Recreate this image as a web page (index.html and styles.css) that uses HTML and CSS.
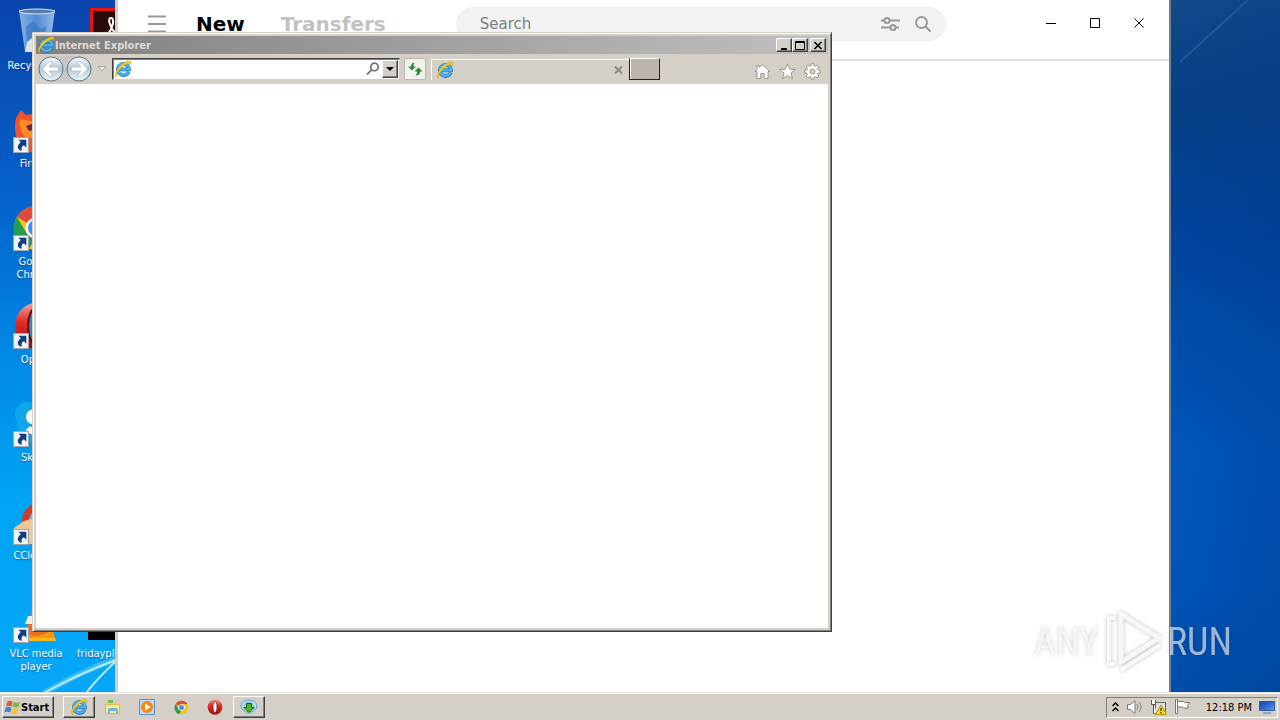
FILE: index.html
```html
<!DOCTYPE html>
<html lang="en">
<head>
<meta charset="utf-8">
<title>Desktop</title>
<link rel="stylesheet" href="styles.css">
</head>
<body>
<svg class="defs" width="0" height="0" aria-hidden="true">
  <defs>
    <linearGradient id="glass" x1="0" y1="0" x2="1" y2="0"><stop offset="0" stop-color="#9cc4ee"/><stop offset=".5" stop-color="#5e95da"/><stop offset="1" stop-color="#b0d0f0"/></linearGradient>
    <linearGradient id="red" x1="0" y1="0" x2="0" y2="1"><stop offset="0" stop-color="#f0a0a0"/><stop offset=".4" stop-color="#e03028"/><stop offset="1" stop-color="#a00a10"/></linearGradient>
    <linearGradient id="orb" x1="0" y1="0" x2="0" y2="1"><stop offset="0" stop-color="#f6fafc"/><stop offset=".5" stop-color="#b4c8d6"/><stop offset="1" stop-color="#e8fbff"/></linearGradient>
    <linearGradient id="screen" x1="0" y1="0" x2="1" y2="1"><stop offset="0" stop-color="#143c9c"/><stop offset=".5" stop-color="#2c6cd0"/><stop offset="1" stop-color="#5aa0ec"/></linearGradient>
    <symbol id="ie" viewBox="0 0 18 18">
      <path d="M14.6 11.6A5.6 5.6 0 1 1 15 9.4H6.2" fill="none" stroke="#1f78bd" stroke-width="3.6"/>
      <path d="M14.4 11.8A5.6 5.6 0 1 1 15 9.4H6.2" fill="none" stroke="#4db4ee" stroke-width="2.4"/>
      <path d="M3 17.2C-.6 16 2 9.4 7 5 11.500 1 16 0 17 2.200c.3.8 0 1.800-.4 2.600.2-2.400-2.800-2.200-7 1C4.500 9.600 1.600 14.500 3 17.200z" fill="#f6cb20" stroke="#c99a10" stroke-width=".4"/>
    </symbol>
    <symbol id="shortcut" viewBox="0 0 15 15">
      <path d="M.5.500h14v14H.5z" fill="#f2f5f8" stroke="#a0a6ae"/>
      <path d="M5 2.500h7.500V10l-2.300-2.300C8 9 7.600 10.500 8.300 13 4.500 12.500 2.500 9 7.300 4.800z" fill="#123f82"/>
    </symbol>
    <symbol id="chrome" viewBox="0 0 48 48">
      <circle cx="24" cy="24" r="22" fill="#f5c518"/>
      <path d="M24 24L5 13A22 22 0 0 1 43 13H24z" fill="#dd4b3e"/>
      <path d="M5 13l10 17 9 4-8 11.500A22 22 0 0 1 5 13z" fill="#279b55"/>
      <circle cx="24" cy="24" r="10.500" fill="#fff"/><circle cx="24" cy="24" r="8" fill="#4a8af0"/>
    </symbol>
    <symbol id="opera" viewBox="0 0 48 48">
      <ellipse cx="24" cy="24" rx="22" ry="23" fill="url(#red)"/>
      <ellipse cx="24" cy="24" rx="6" ry="17" fill="#fff" stroke="#7c0808" stroke-width="2"/>
    </symbol>
  </defs>
</svg>
<div class="screen">
  <main class="desktop">
    <svg class="rays" viewBox="0 0 115 90" aria-hidden="true">
      <path d="M44 91Q80 70 116 57" fill="none" stroke="#5cc8fb" stroke-width="6" opacity=".6"/>
      <path d="M44 91Q80 71 116 58M86 91Q98 76 116 59" fill="none" stroke="#b8ecff" stroke-width="2"/>
    </svg>
    <svg class="ray-top" viewBox="0 0 110 90" aria-hidden="true"><path d="M10 62L78 0" stroke="#3a72a8" stroke-width="2" opacity=".4"/></svg>

    <div class="icons">
      <div class="shortcut c1 r1">
        <svg viewBox="0 0 48 48"><path d="M7 2h36l-6 42H13z" fill="url(#glass)" opacity=".85"/><path d="M14 18l8-5 6 8 6-3-2 20H15z" fill="#3c78c8" opacity=".7"/><path d="M15 34l5-4 8 4 5-3-1 13H13z" fill="#dfe5ea"/><ellipse cx="25" cy="3.500" rx="18" ry="2.500" fill="#5a7da8" stroke="#d5e5f5"/></svg>
        <span>Recycle Bin</span>
      </div>
      <div class="shortcut c2 r1">
        <svg viewBox="0 0 48 48"><path d="M5.500 1.500h40v45h-40z" fill="#2b0a0c" stroke="#e5170e" stroke-width="3"/><path d="M22 26c5-6 7-16 3-16s-1 9 4 15" fill="none" stroke="#fff" stroke-width="2"/></svg>
      </div>
      <div class="shortcut c1 r2">
        <svg viewBox="0 0 48 48"><path d="M4 12l5-8 5 5 6-1 4-6 20 18c2 16-8 27-20 27C9 47 0 32 4 12z" fill="#f4522c"/><path d="M8 13l14 3v16h-8q-8-8-6-19z" fill="#f98d24"/><path d="M14 20l8-3v7l-5 1z" fill="#74204c"/></svg>
        <svg class="arrow"><use href="#shortcut"/></svg>
        <span>Firefox</span>
      </div>
      <div class="shortcut c1 r3">
        <svg><use href="#chrome"/></svg><svg class="arrow"><use href="#shortcut"/></svg>
        <span>Google Chrome</span>
      </div>
      <div class="shortcut c1 r4">
        <svg viewBox="0 0 48 48"><ellipse cx="24" cy="24" rx="21" ry="23" fill="url(#red)"/><ellipse cx="24" cy="24" rx="8" ry="18" fill="#2a86c8" stroke="#6a0808" stroke-width="2"/></svg>
        <svg class="arrow"><use href="#shortcut"/></svg>
        <span>Opera</span>
      </div>
      <div class="shortcut c1 r5">
        <svg viewBox="0 0 48 48"><circle cx="15" cy="14" r="12" fill="#0aa8ee"/><circle cx="25" cy="24" r="20" fill="#12a5ea"/><path d="M34 15c-5-5-17-5-17 2 0 8 17 4 17 11 0 6-13 6-18 0" fill="none" stroke="#fff" stroke-width="6"/></svg>
        <svg class="arrow"><use href="#shortcut"/></svg>
        <span>Skype</span>
      </div>
      <div class="shortcut c1 r6">
        <svg viewBox="0 0 48 48"><circle cx="29" cy="23" r="19" fill="#d43a2c"/><circle cx="29" cy="23" r="12" fill="#78b4d8"/><path d="M2 30l10-7 7-2 14 11-12 14H3z" fill="#efc898"/></svg>
        <svg class="arrow"><use href="#shortcut"/></svg>
        <span>CCleaner</span>
      </div>
      <div class="shortcut c1 r7">
        <svg viewBox="0 0 48 48"><path d="M10 31h30l4 14H5z" fill="#f39a12"/><path d="M24 2l12 34c-6 5-18 5-23 0z" fill="#e8701c"/><path d="M16 20l16 0 3 8-22 0z" fill="#eee"/><path d="M9 42h34l1 3H7z" fill="#fbb81c"/></svg>
        <svg class="arrow"><use href="#shortcut"/></svg>
        <span>VLC media player</span>
      </div>
      <div class="shortcut c2 r7">
        <svg viewBox="0 0 48 48"><path d="M2 0h44v44H2z" fill="#000"/></svg>
        <span>fridayplanner</span>
      </div>
    </div>

    <section class="app" aria-label="Transfers application">
      <header class="app-head">
        <button class="plain menu" aria-label="Menu"><svg width="18" height="18" viewBox="0 0 18 18"><path d="M0 1.500h18M0 9h18M0 16.500h18" stroke="#999" stroke-width="2"/></svg></button>
        <nav class="app-tabs"><a href="#new" class="current">New</a><a href="#transfers">Transfers</a></nav>
        <form class="search">
          <input type="text" placeholder="Search" aria-label="Search">
          <button type="button" class="plain" aria-label="Filter"><svg width="20" height="16" viewBox="0 0 20 16"><g fill="none" stroke="#999" stroke-width="2"><path d="M1 4.500h3M10 4.500h10M1 11.500h9M16 11.500h3"/><circle cx="7" cy="4.500" r="2.600"/><circle cx="13" cy="11.500" r="2.600"/></g></svg></button>
          <button type="button" class="plain" aria-label="Find"><svg width="18" height="18" viewBox="0 0 18 18"><g fill="none" stroke="#999" stroke-width="2"><circle cx="7.500" cy="7.500" r="5.500"/><path d="M11.500 11.500l5 5"/></g></svg></button>
        </form>
        <div class="app-controls">
          <button class="plain" aria-label="Minimize"><svg width="12" height="12" viewBox="0 0 12 12"><path d="M1 5.500h10" stroke="#000"/></svg></button>
          <button class="plain" aria-label="Maximize"><svg width="12" height="12" viewBox="0 0 12 12"><path d="M1.500.500h9v9h-9z" fill="none" stroke="#000"/></svg></button>
          <button class="plain" aria-label="Close"><svg width="12" height="12" viewBox="0 0 12 12"><path d="M1.500.500l9 9M10.500.500l-9 9" stroke="#000"/></svg></button>
        </div>
      </header>
    </section>

    <section class="browser" aria-label="Internet Explorer">
      <header class="titlebar">
        <svg width="18" height="18"><use href="#ie"/></svg>
        <h1>Internet Explorer</h1>
        <button class="cap" aria-label="Minimize"><svg width="10" height="9" viewBox="0 0 10 9"><path d="M2 7h6v2H2z"/></svg></button>
        <button class="cap" aria-label="Maximize"><svg width="10" height="9" viewBox="0 0 10 9"><path d="M.5.500h9v8h-9zM.5 1.500h9" fill="none" stroke="#000"/></svg></button>
        <button class="cap close" aria-label="Close"><svg width="10" height="9" viewBox="0 0 10 9"><path d="M1.500 1l7 7M8.500 1l-7 7" stroke="#000" stroke-width="1.600"/></svg></button>
      </header>
      <div class="toolbar">
        <div class="travel">
          <button class="plain" aria-label="Back"><svg width="26" height="26" viewBox="0 0 26 26"><circle cx="13" cy="13" r="12" fill="url(#orb)" stroke="#66737e"/><path d="M4.500 13L11 6h4l-4 5h9.500v4H11l4 5h-4z" fill="#fff" stroke="#9fb4c4" stroke-width=".6"/></svg></button>
          <button class="plain" aria-label="Forward"><svg width="26" height="26" viewBox="0 0 26 26"><circle cx="13" cy="13" r="12" fill="url(#orb)" stroke="#66737e"/><path d="M21.500 13L15 6h-4l4 5H5.500v4H15l-4 5h4z" fill="#fff" stroke="#9fb4c4" stroke-width=".6"/></svg></button>
        </div>
        <button class="plain recent" aria-label="Recent pages"><svg width="10" height="6" viewBox="0 0 10 6"><path d="M1 .5h8l-4 4.500z" fill="#e8e5e0" stroke="#aaa59e"/></svg></button>
        <div class="address">
          <svg width="18" height="18"><use href="#ie"/></svg>
          <input type="text" aria-label="Address">
          <button class="plain" aria-label="Search"><svg width="14" height="14" viewBox="0 0 14 14"><g fill="none" stroke="#777" stroke-width="1.800"><circle cx="8.500" cy="5" r="3.800"/><path d="M5.500 8L1 12.500"/></g></svg></button>
          <button class="drop" aria-label="Show addresses"><svg width="8" height="4" viewBox="0 0 8 4"><path d="M0 0h8L4 4z"/></svg></button>
        </div>
        <button class="refresh" aria-label="Refresh"><svg width="16" height="16" viewBox="0 0 16 16"><path d="M7.500 1.500C5 2 4 3 4 5.500H1L5 9.500l4-4H6.500C6.500 3.500 7 2.500 7.500 1.500zM8.500 14.500c1-1 1.500-2 1.500-4H7.500l4-4 4 4H13c0 3-1.500 4-4.500 4z" fill="#2f8a35"/></svg></button>
        <div class="tab">
          <svg width="18" height="18"><use href="#ie"/></svg>
          <button class="plain" aria-label="Close tab"><svg width="9" height="8" viewBox="0 0 9 8"><path d="M1 .5l7 7M8 .5l-7 7" stroke="#888" stroke-width="2"/></svg></button>
        </div>
        <button class="newtab" aria-label="New tab"></button>
        <div class="tools">
          <button class="plain" aria-label="Home"><svg width="17" height="17" viewBox="0 0 17 17"><path d="M8.500 1.500l7.500 7h-2V15.500H10.200V10.500H6.800v5H3V8.500H1L3 6.500V2.500h2v2z" fill="#fff" stroke="#9a9690"/></svg></button>
          <button class="plain" aria-label="Favorites"><svg width="17" height="17" viewBox="0 0 17 17"><path d="M8.500.8l2.200 5.400 5.700.3-4.400 3.600 1.500 5.700-5-3.200-5 3.200L5 10.100.6 6.500l5.700-.3z" fill="#fff" stroke="#9a9690"/></svg></button>
          <button class="plain" aria-label="Tools"><svg width="17" height="17" viewBox="0 0 17 17"><path d="M7 .8h3v2l1.500.6L13 2l2 2-1.400 1.500.6 1.500h2v3h-2l-.6 1.500L15 13l-2 2-1.500-1.400-1.500.6v2H7v-2l-1.500-.6L4 15l-2-2 1.400-1.500L2.800 10h-2V7h2l.6-1.500L2 4l2-2 1.500 1.400L7 2.800z" fill="#fff" stroke="#9a9690"/><circle cx="8.500" cy="8.500" r="2.500" fill="#d4d0c8" stroke="#9a9690"/></svg></button>
        </div>
      </div>
      <div class="page"></div>
    </section>

    <div class="watermark" aria-label="ANY RUN">
      <span>ANY</span>
      <svg width="60" height="64" viewBox="0 0 60 64" fill="none" stroke="#fff" stroke-opacity=".8" stroke-width="4" stroke-linejoin="round"><path d="M18 4l38 24-38 24z" stroke-width="5"/><path d="M12 8H6v46h6M18 60l39-25"/></svg>
      <span>RUN</span>
    </div>
  </main>

  <footer class="taskbar">
    <button class="start"><svg width="17" height="17" viewBox="0 0 17 17"><path d="M3.500 2.500Q6 1 8.500 2.500L7.500 7.500Q5 6 2 7.500z" fill="#e8552a"/><path d="M9.500 3q3 1.500 6.500 0l-1.500 5q-3 1-6-.5z" fill="#7dbb3c"/><path d="M1.800 8.500q3-1.500 5.500 0l-1 5q-3-1.500-6 0z" fill="#3c86d8"/><path d="M8.200 9q3 1.500 6 .5l-1.500 5q-3 1-5.500-.5z" fill="#f7c62c"/></svg>Start</button>
    <nav class="tasks">
      <button class="task raised" aria-label="Internet Explorer"><svg width="18" height="18"><use href="#ie"/></svg></button>
      <button class="task" aria-label="Explorer"><svg width="18" height="18" viewBox="0 0 18 18"><path d="M2 3h5l1 2h7v11H2z" fill="#f0cf6a"/><path d="M4 2h5v3H4z" fill="#6fbf58"/><path d="M1.500 6.500h14v9h-14z" fill="#fae795" stroke="#dcbc55"/><path d="M4 16v-4q0-2 2-2h6q2 0 2 2v4h-2v-3H6v3z" fill="#6cb9e6"/></svg></button>
      <button class="task" aria-label="Media Player"><svg width="18" height="18" viewBox="0 0 18 18"><path d="M1.500 1.500h15v15h-15z" fill="#b9d8f4" stroke="#5e94c6"/><circle cx="9" cy="9" r="6" fill="#f58a14"/><path d="M7 5.500l5.500 3.500L7 12.500z" fill="#fff"/></svg></button>
      <button class="task" aria-label="Chrome"><svg width="15" height="15"><use href="#chrome"/></svg></button>
      <button class="task" aria-label="Opera"><svg width="16" height="16"><use href="#opera"/></svg></button>
      <button class="task raised" aria-label="Downloader"><svg width="18" height="18" viewBox="0 0 18 18"><ellipse cx="9" cy="8" rx="8" ry="6" fill="#b6dff0" stroke="#5da6c6"/><ellipse cx="9" cy="10" rx="5" ry="6" fill="none" stroke="#78bdd6"/><path d="M6.500 5.500h5v4H14l-5 5-5-5h2.500z" fill="#4cb522" stroke="#26600f"/></svg></button>
    </nav>
    <div class="tray">
      <button class="plain" aria-label="Show hidden icons"><svg width="7" height="10" viewBox="0 0 7 10"><path d="M.5 4l3-3 3 3M.5 9l3-3 3 3" fill="none" stroke="#000" stroke-width="1.500"/></svg></button>
      <button class="plain" aria-label="Volume"><svg width="17" height="16" viewBox="0 0 17 16"><path d="M1.500 5.500h3L9 1.500v13l-4.500-4h-3z" fill="#fff" stroke="#777"/><path d="M11 5q2 3 0 6M13 3q4 5 0 10" fill="none" stroke="#888"/></svg></button>
      <button class="plain" aria-label="Network"><svg width="17" height="16" viewBox="0 0 17 16"><path d="M5.500 3.500h10v9h-10z" fill="#ddd" stroke="#666"/><path d="M1.500 1v4.500h4V1M3.500 5.500V14.500h4" fill="#fff" stroke="#555"/><path d="M11 6l5.500 9.500h-11z" fill="#f8d823" stroke="#b99a00"/><path d="M11 9v3M11 13v1.500" stroke="#000"/></svg></button>
      <button class="plain" aria-label="Action Center"><svg width="17" height="16" viewBox="0 0 17 16"><path d="M1.500.500h2v14h-2z" fill="#fff" stroke="#777"/><path d="M3.500 2.500h6l1 1h5l-2 3 1 2.500h-5l-1-1h-5z" fill="#fff" stroke="#777"/></svg></button>
      <time>12:18 PM</time>
      <button class="plain" aria-label="Show desktop"><svg width="16" height="14" viewBox="0 0 16 14"><path d="M.5 1.500h15v9h-15z" fill="url(#screen)" stroke="#36589c"/><path d="M4 13h8" stroke="#8aa6c8" stroke-width="2"/></svg></button>
    </div>
  </footer>
</div>
</body>
</html>
```
FILE: styles.css
```css
* { box-sizing: border-box; }
body { margin: 0; font: 11px/13px "DejaVu Sans Condensed", "DejaVu Sans", sans-serif; color: #000; }
svg { display: block; flex: none; }
.defs { position: absolute; }
button, input { font: inherit; color: inherit; margin: 0; padding: 0; border: 0; border-radius: 0; }
.plain { background: none; display: flex; align-items: center; justify-content: center; }
.screen { height: 100vh; display: flex; flex-direction: column; overflow: hidden; }

.desktop {
  position: relative; flex: 1; overflow: hidden;
  background:
    linear-gradient(100deg, transparent, rgba(0, 50, 130, .4)) right / 110px 100% no-repeat,
    linear-gradient(#12498a, #064084 15%, #0046a0 35%, #005cc2 65%, #005cc4 85%, #0054b4) right / 110px 100% no-repeat,
    linear-gradient(#0a44ac, #0560c8 27%, #0286e4 50%, #00a4f2 72%, #06a6f8);
}
.rays { position: absolute; left: 0; bottom: 0; width: 115px; height: 90px; }
.ray-top { position: absolute; right: 0; top: 0; width: 110px; height: 90px; }

.icons { display: grid; grid-template-columns: 72px 72px; grid-auto-rows: 98px; column-gap: 2px; padding-top: 8px; }
.shortcut { position: relative; display: flex; flex-direction: column; align-items: center; gap: 3px; color: #fff; text-align: center; text-shadow: 0 1px 1px rgba(0, 30, 80, .5); }
.shortcut svg { width: 48px; height: 48px; }
.shortcut .arrow { position: absolute; left: 13px; top: 31px; width: 16px; height: 16px; }
.shortcut span { width: 60px; }
.c1 { grid-column: 1; }
.c2 { grid-column: 2; }
.c2 span, .r1 span { width: auto; white-space: nowrap; }
.r1 { grid-row: 1; }
.r2 { grid-row: 2; }
.r3 { grid-row: 3; }
.r4 { grid-row: 4; }
.r5 { grid-row: 5; }
.r6 { grid-row: 6; }
.r7 { grid-row: 7; }

.app { position: absolute; left: 115px; right: 109px; top: 0; bottom: 0; background: #fff; border: solid #d4d0c8; border-width: 0 2px 0 3px; border-right-color: #70808c; }
.app-head { display: flex; align-items: center; height: 61px; padding: 0 18px 11px 30px; border-bottom: 2px solid #e1e1e1; font-family: "DejaVu Sans", sans-serif; }
.app-tabs { display: flex; gap: 36px; margin: 0 70px 0 30px; font-size: 20px; line-height: 24px; font-weight: bold; }
.app-tabs a { color: #c2c2c2; text-decoration: none; }
.app-tabs .current { color: #000; }
.search { display: flex; align-items: center; gap: 14px; width: 490px; height: 34px; padding: 0 14px 0 24px; border-radius: 17px; background: #f2f2f2; }
.search input { flex: 1; min-width: 0; background: none; font-size: 15px; line-height: 20px; }
.search input::placeholder { color: #808080; opacity: 1; }
.app-controls { display: flex; gap: 32px; margin-left: auto; padding-right: 6px; }

.browser { position: absolute; left: 32px; top: 32px; width: 800px; height: 600px; padding: 3px; display: flex; flex-direction: column; background: #d4d0c8; border: 1px solid; border-color: #d4d0c8 #404040 #404040 #d4d0c8; box-shadow: inset 1px 1px #fff, inset -1px -1px #808080; }
.titlebar { display: flex; align-items: center; height: 18px; padding: 0 2px 0 1px; background: linear-gradient(90deg, #808080, #c0c0c0); }
.titlebar h1 { flex: 1; margin: 0; font-size: 11px; line-height: 13px; color: #dedad2; }
.cap { width: 16px; height: 14px; display: flex; align-items: center; justify-content: center; background: #d4d0c8; border: 1px solid; border-color: #fff #404040 #404040 #fff; box-shadow: inset -1px -1px #808080; }
.close { margin-left: 2px; }
.toolbar { display: flex; align-items: center; height: 30px; padding: 0 7px 0 2px; }
.travel { display: flex; gap: 2px; border-radius: 14px; background: #c8c6c2; }
.recent { width: 20px; }
.address { display: flex; align-items: center; width: 288px; height: 22px; padding-left: 1px; background: #fff; border: 1px solid; border-color: #404040 #d4d0c8 #d4d0c8 #404040; box-shadow: inset 1px 1px #808080; }
.address input { flex: 1; min-width: 0; background: none; }
.drop { display: flex; align-items: center; justify-content: center; width: 16px; height: 18px; margin: 0 1px 0 2px; background: #d4d0c8; border: 1px solid; border-color: #fff #404040 #404040 #fff; box-shadow: inset -1px -1px #808080; }
.refresh { display: flex; align-items: center; justify-content: center; width: 22px; height: 22px; margin: 0 5px 0 4px; background: #f2f2ee; border: 1px solid #bcb8b4; border-radius: 2px; }
.tab { display: flex; align-items: center; justify-content: space-between; width: 198px; height: 21px; padding: 0 6px 0 4px; border: solid #fff; border-width: 1px 0 0 1px; }
.newtab { width: 31px; height: 22px; background: #bcb5ae; border: 1px solid; border-color: #fff #202020 #202020; box-shadow: inset 1px 0 #fff; }
.tools { display: flex; gap: 8px; margin-left: auto; padding-top: 4px; }
.page { flex: 1; background: #fff; }

.watermark { position: absolute; right: 48px; bottom: 18px; display: flex; align-items: center; gap: 4px; font: 38px/64px "Roboto Condensed", "Open Sans Condensed", "Liberation Sans Narrow", "DejaVu Sans Condensed", sans-serif; color: rgba(255, 255, 255, .6); filter: drop-shadow(0 0 2px rgba(0, 0, 0, .3)); }

.taskbar { display: flex; align-items: center; height: 28px; padding: 1px 2px 0; background: #d4d0c8; border-top: 1px solid #e6e2dc; box-shadow: inset 0 1px #fff; }
.start, .raised { border: 1px solid; border-color: #fff #404040 #404040 #fff; box-shadow: inset -1px -1px #808080; background: #d4d0c8; }
.start { display: flex; align-items: center; height: 22px; width: 52px; padding-left: 1px; font-weight: bold; }
.tasks { display: flex; gap: 2px; margin-left: 9px; }
.task { display: flex; align-items: center; justify-content: center; width: 32px; height: 22px; }
.task:not(.raised) { background: none; }
.tray { display: flex; align-items: center; gap: 7px; height: 21px; margin-left: auto; padding: 0 2px 0 5px; border: 1px solid; border-color: #808080 #fff #fff #808080; }
.tray time { margin: 0 0 0 8px; }
```
